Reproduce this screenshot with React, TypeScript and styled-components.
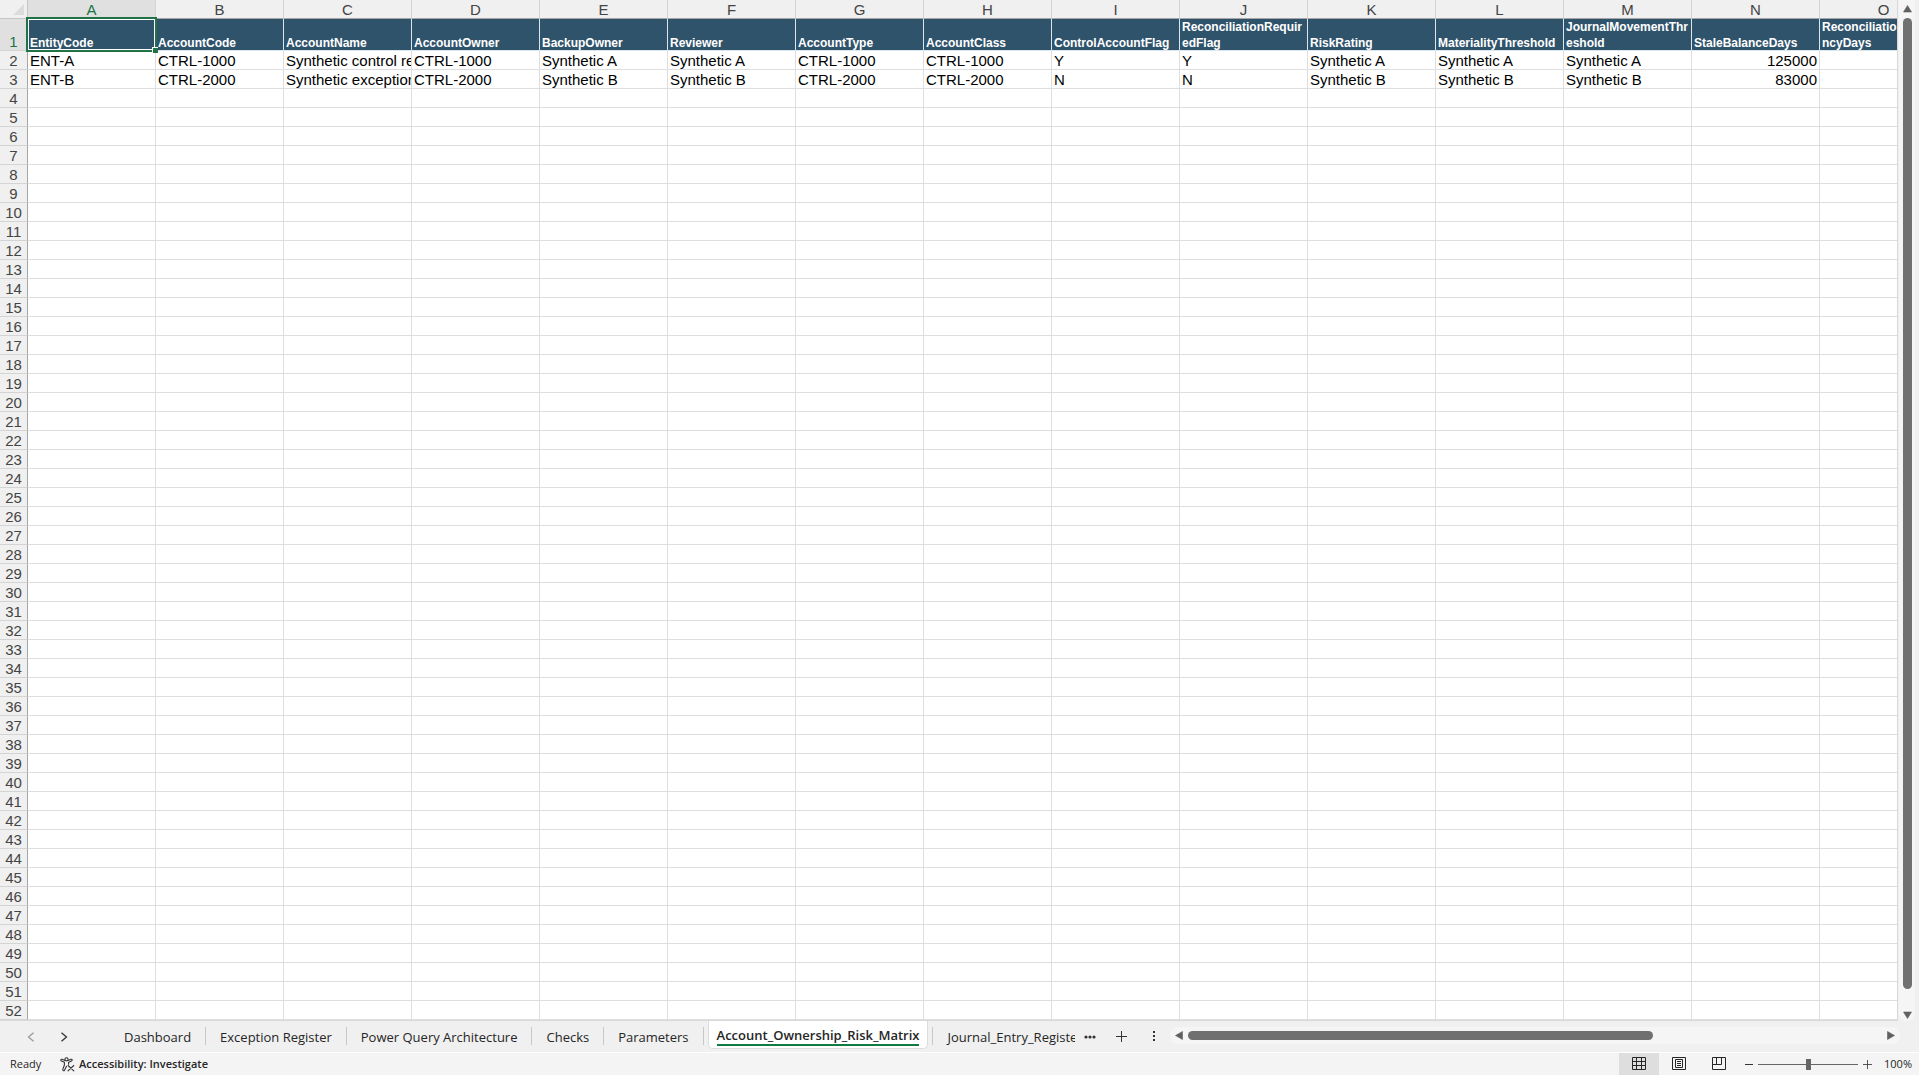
import React from "react";
import styled, { createGlobalStyle, css } from "styled-components";

const sans = '"Liberation Sans", Arial, sans-serif';
const ui = '"Open Sans", "Segoe UI", sans-serif';

const GlobalStyle = createGlobalStyle`
  *, *::before, *::after { box-sizing: border-box; }
  html, body { margin: 0; padding: 0; overflow: hidden; }
  body { background: #f0f0f0; color: #262626; font-family: ${ui}; }
  button { font: inherit; color: inherit; border: 0; padding: 0; margin: 0; background: transparent; }
`;

const Workbook = styled.div`
  display: grid;
  grid-template-rows: minmax(0, 1fr) 32px 22px;
  height: 100vh;
`;

const SheetArea = styled.main`
  display: grid;
  grid-template-columns: minmax(0, 1fr) 21px;
  min-height: 0;
`;

const GridView = styled.div`
  overflow: hidden;
  min-height: 0;
  background: #ffffff;
  border-right: 1px solid #d9d9d9;
  border-bottom: 1px solid #d9d9d9;
`;

const Grid = styled.table`
  table-layout: fixed;
  width: 1948px;
  border-collapse: separate;
  border-spacing: 0;
  font-family: ${sans};
`;

const headingBase = css`
  height: 19px;
  padding: 0;
  font-size: 15px;
  font-weight: 400;
  text-align: center;
  color: #444444;
  background: #f0f0f0;
`;

const ColumnHeading = styled.th<{ $active?: boolean }>`
  ${headingBase}
  padding-top: 1px;
  line-height: 17px;
  border-bottom: 1px solid #a6a6a6;
  border-right: 1px solid #d4d4d4;
  ${(p) => p.$active && css`
    color: #217346;
    background: #e0e0e0;
    border-bottom-color: #217346;
  `}
`;

const Corner = styled.th`
  ${headingBase}
  border-bottom: 1px solid #c4c4c4;
  border-right: 1px solid #c4c4c4;
`;

const CornerMark = styled.svg`
  display: block;
  margin: 0 3px 0 auto;
`;

const RowHeading = styled.th<{ $active?: boolean }>`
  ${headingBase}
  padding-top: 1px;
  line-height: 17px;
  border-bottom: 1px solid #d4d4d4;
  border-right: 1px solid #a6a6a6;
  vertical-align: bottom;
  ${(p) => p.$active && css`
    color: #217346;
    background: #e0e0e0;
    border-right-color: #217346;
  `}
`;

const FieldCell = styled.td`
  position: relative;
  height: 32px;
  padding: 0 2px;
  font-size: 12px;
  font-weight: 700;
  line-height: 16px;
  color: #ffffff;
  background: #30536c;
  vertical-align: bottom;
  word-break: break-all;
  border-right: 1px solid #dce6ee;
  border-bottom: 1px solid #dce6ee;
`;

const FieldText = styled.div`
  margin-bottom: -1px;
`;

const Selection = styled.span`
  position: absolute;
  inset: -2px;
  z-index: 2;
  border: 2px solid #217346;
  box-shadow: inset 0 0 0 1px #ffffff;
  &::after {
    content: "";
    position: absolute;
    right: -3px;
    bottom: -3px;
    width: 6px;
    height: 6px;
    background: #217346;
    border-top: 1px solid #ffffff;
    border-left: 1px solid #ffffff;
  }
`;

const Cell = styled.td<{ $right?: boolean }>`
  height: 19px;
  padding: 1px 2px 0;
  font-size: 15px;
  line-height: 17px;
  color: #000000;
  white-space: nowrap;
  overflow: hidden;
  text-align: ${(p) => (p.$right ? "right" : "left")};
  border-right: 1px solid #dedede;
  border-bottom: 1px solid #dedede;
`;

const VerticalBar = styled.div`
  display: flex;
  flex-direction: column;
  align-items: center;
  margin: 0 4px 0 1px;
  padding: 5px 0 2px;
  gap: 5px;
  background: #f5f5f5;
  border-radius: 0 0 8px 8px;
`;

const VerticalTrack = styled.div`
  display: flex;
  flex: 1;
  padding-bottom: 17px;
`;

const VerticalThumb = styled.div`
  width: 9px;
  border-radius: 5px;
  background: #707070;
`;

const ArrowButton = styled.button`
  display: block;
  line-height: 0;
  svg { display: block; }
`;

const TabBar = styled.nav`
  display: flex;
  min-width: 0;
  background: #f0f0f0;
  border-bottom: 1px solid #ffffff;
`;

const TabNav = styled.div`
  display: flex;
  align-items: center;
  gap: 25px;
  width: 110px;
  padding-left: 27px;
`;

const TabList = styled.div`
  display: flex;
  align-items: flex-start;
`;

const Tab = styled.button<{ $clip?: boolean }>`
  height: 31px;
  padding: 1px ${(p) => (p.$clip ? 0 : 14)}px 0 14px;
  ${(p) => p.$clip && css`width: 142px; text-align: left; overflow: hidden;`}
  font-size: 13px;
  line-height: 30px;
  white-space: nowrap;
`;

const Divider = styled.span`
  width: 1px;
  height: 18px;
  margin-top: 6px;
  background: #c8c8c8;
`;

const ActiveTab = styled.button`
  height: 28px;
  margin: 0 4px;
  padding: 0 8px;
  background: #ffffff;
  border: 1px solid #dcdcdc;
  border-top: 0;
  border-radius: 0 0 5px 5px;
  font-size: 13px;
  font-weight: 600;
  line-height: 25px;
  white-space: nowrap;
`;

const ActiveLabel = styled.span`
  display: block;
  height: 23px;
  border-bottom: 2px solid #107c41;
`;

const TabTools = styled.div`
  display: flex;
  align-items: center;
  gap: 20px;
  padding: 0 11px 0 9px;
`;

const HorizontalBar = styled.div`
  display: flex;
  flex: 1;
  align-items: center;
  gap: 5px;
  height: 17px;
  margin: 6px 19px 0 0;
  padding: 0 5px;
  background: #f5f5f5;
  border-radius: 8px;
`;

const HorizontalTrack = styled.div`
  flex: 1;
`;

const HorizontalThumb = styled.div`
  width: 67%;
  height: 9px;
  border-radius: 5px;
  background: #707070;
`;

const StatusBar = styled.footer`
  display: flex;
  align-items: stretch;
  justify-content: space-between;
  background: #f4f4f4;
  font-size: 11px;
  line-height: 22px;
`;

const StatusGroup = styled.div`
  display: flex;
  align-items: center;
`;

const Ready = styled.span`
  width: 60px;
  padding-left: 10px;
`;

const AccessButton = styled.button`
  display: flex;
  align-items: center;
  gap: 4px;
  font-weight: 600;
`;

const ViewButton = styled.button<{ $active?: boolean }>`
  display: flex;
  align-items: center;
  justify-content: center;
  width: 40px;
  height: 22px;
  background: ${(p) => (p.$active ? "#dedede" : "transparent")};
`;

const ZoomGroup = styled.div`
  display: flex;
  align-items: center;
  gap: 5px;
  padding: 0 7px 0 6px;
`;

const ZoomSlider = styled.input`
  appearance: none;
  width: 100px;
  height: 22px;
  margin: 0;
  background: linear-gradient(#666666, #666666) center / 100% 1px no-repeat;
  &::-webkit-slider-thumb {
    appearance: none;
    width: 5px;
    height: 11px;
    background: #666666;
  }
`;

const ZoomValue = styled.button`
  width: 35px;
  text-align: right;
`;

const letters = "ABCDEFGHIJKLMNO".split("");

const fields = [
  "EntityCode", "AccountCode", "AccountName", "AccountOwner", "BackupOwner",
  "Reviewer", "AccountType", "AccountClass", "ControlAccountFlag",
  "ReconciliationRequiredFlag", "RiskRating", "MaterialityThreshold",
  "JournalMovementThreshold", "StaleBalanceDays", "ReconciliationFrequencyDays",
];

const records = [
  ["ENT-A", "CTRL-1000", "Synthetic control re", "CTRL-1000", "Synthetic A", "Synthetic A", "CTRL-1000", "CTRL-1000", "Y", "Y", "Synthetic A", "Synthetic A", "Synthetic A", "125000", ""],
  ["ENT-B", "CTRL-2000", "Synthetic exception", "CTRL-2000", "Synthetic B", "Synthetic B", "CTRL-2000", "CTRL-2000", "N", "N", "Synthetic B", "Synthetic B", "Synthetic B", "83000", ""],
];

const rowNumbers = Array.from({ length: 51 }, (_, i) => i + 2);

const Triangle = ({ direction }: { direction: "up" | "down" | "left" | "right" }) => {
  const shapes = {
    up: "M4.5 0.5 8.5 7H0.5Z",
    down: "M0.5 1H8.5L4.5 7.5Z",
    left: "M7.5 0.5V8.5L0.5 4.5Z",
    right: "M0.5 0.5V8.5L7.5 4.5Z",
  };
  const vertical = direction === "up" || direction === "down";
  return (
    <svg width={vertical ? 9 : 8} height={vertical ? 8 : 9} aria-hidden="true">
      <path d={shapes[direction]} fill="#606060" stroke="#606060" strokeWidth="0.6" strokeLinejoin="round" />
    </svg>
  );
};

const Chevron = ({ left }: { left?: boolean }) => (
  <svg width="8" height="10" viewBox="0 0 8 10" fill="none" stroke={left ? "#9a9a9a" : "#333333"} strokeWidth="1.3" aria-hidden="true">
    <path d={left ? "M6.5 0.7 1.5 5 6.5 9.3" : "M1.5 0.7 6.5 5 1.5 9.3"} />
  </svg>
);

const AccessibilityIcon = () => (
  <svg width="15" height="15" viewBox="0 0 15 15" fill="none" stroke="#333333" strokeWidth="1.1" strokeLinecap="round" strokeLinejoin="round" aria-hidden="true">
    <circle cx="6.5" cy="2.3" r="1.6" />
    <path d="M5 3.4 2 2.3C.8 2 .4 3.4 1.4 3.9L4.4 5.2V8L2.8 12.4C2.5 13.8 4 14.2 4.5 13.2L6.5 9.2" />
    <path d="M8 3.4 11 2.3C12.2 2 12.7 3.4 11.6 3.9L8.6 5.2V7.2" />
    <path d="M8 8.5 13.8 13.8M13.8 8.5 8 13.8" />
  </svg>
);

const NormalIcon = () => (
  <svg width="14" height="14" fill="none" stroke="#262626" aria-hidden="true">
    <path d="M.5 .5H13.5V12.5H.5ZM4.5 .5V12.5M9.5 .5V12.5M.5 4.5H13.5M.5 8.5H13.5" />
  </svg>
);

const PageLayoutIcon = () => (
  <svg width="14" height="14" fill="none" stroke="#262626" aria-hidden="true">
    <path d="M.5 .5H13.5V12.5H.5ZM3.5 2.5H10.5V10.5H3.5ZM5 4.5H9M5 6.5H9M5 8.5H9" />
  </svg>
);

const PageBreakIcon = () => (
  <svg width="14" height="14" fill="none" stroke="#262626" aria-hidden="true">
    <path d="M.5 .5H13.5V12.5H.5ZM4.5 .5V7.5M9.5 .5V7.5M.5 7.5H9.5" />
  </svg>
);

const PlusIcon = ({ size }: { size: number }) => (
  <svg width={size} height={size} viewBox="0 0 11 11" stroke="#333333" aria-hidden="true">
    <path d="M5.5 0V11M0 5.5H11" />
  </svg>
);

const inactiveTabs = ["Dashboard", "Exception Register", "Power Query Architecture", "Checks", "Parameters"];

export default function App() {
  return (
    <>
      <GlobalStyle />
      <Workbook>
        <SheetArea>
          <GridView>
            <Grid>
              <colgroup>
                <col style={{ width: 28 }} />
                {letters.map((l) => <col key={l} />)}
              </colgroup>
              <thead>
                <tr>
                  <Corner>
                    <CornerMark width="11" height="11" aria-hidden="true"><path d="M11 0V11H0Z" fill="#dcdcdc" /></CornerMark>
                  </Corner>
                  {letters.map((l, i) => <ColumnHeading key={l} scope="col" $active={i === 0}>{l}</ColumnHeading>)}
                </tr>
              </thead>
              <tbody>
                <tr>
                  <RowHeading scope="row" $active>1</RowHeading>
                  {fields.map((f, i) => (
                    <FieldCell key={f}>
                      <FieldText>{f}</FieldText>
                      {i === 0 && <Selection />}
                    </FieldCell>
                  ))}
                </tr>
                {rowNumbers.map((n) => (
                  <tr key={n}>
                    <RowHeading scope="row">{n}</RowHeading>
                    {letters.map((l, c) => (
                      <Cell key={l} $right={l === "N"}>{records[n - 2]?.[c]}</Cell>
                    ))}
                  </tr>
                ))}
              </tbody>
            </Grid>
          </GridView>
          <VerticalBar>
            <ArrowButton aria-label="Scroll up"><Triangle direction="up" /></ArrowButton>
            <VerticalTrack><VerticalThumb /></VerticalTrack>
            <ArrowButton aria-label="Scroll down"><Triangle direction="down" /></ArrowButton>
          </VerticalBar>
        </SheetArea>
        <TabBar aria-label="Sheets">
          <TabNav>
            <ArrowButton aria-label="Previous sheets"><Chevron left /></ArrowButton>
            <ArrowButton aria-label="Next sheets"><Chevron /></ArrowButton>
          </TabNav>
          <TabList>
            {inactiveTabs.map((t) => (
              <React.Fragment key={t}>
                <Tab>{t}</Tab>
                <Divider />
              </React.Fragment>
            ))}
            <ActiveTab aria-current="page"><ActiveLabel>Account_Ownership_Risk_Matrix</ActiveLabel></ActiveTab>
            <Divider />
            <Tab $clip>Journal_Entry_Register</Tab>
          </TabList>
          <TabTools>
            <ArrowButton aria-label="More sheets">
              <svg width="12" height="4" fill="#333333" aria-hidden="true"><circle cx="2" cy="2" r="1.6" /><circle cx="6" cy="2" r="1.6" /><circle cx="10" cy="2" r="1.6" /></svg>
            </ArrowButton>
            <ArrowButton aria-label="New sheet"><PlusIcon size={11} /></ArrowButton>
            <svg width="12" height="11" fill="#333333" aria-hidden="true"><path d="M6 0H8V2H6ZM6 4H8V6H6ZM6 8H8V10H6Z" /></svg>
          </TabTools>
          <HorizontalBar>
            <ArrowButton aria-label="Scroll left"><Triangle direction="left" /></ArrowButton>
            <HorizontalTrack><HorizontalThumb /></HorizontalTrack>
            <ArrowButton aria-label="Scroll right"><Triangle direction="right" /></ArrowButton>
          </HorizontalBar>
        </TabBar>
        <StatusBar>
          <StatusGroup>
            <Ready>Ready</Ready>
            <AccessButton><AccessibilityIcon />Accessibility: Investigate</AccessButton>
          </StatusGroup>
          <StatusGroup>
            <ViewButton $active aria-label="Normal"><NormalIcon /></ViewButton>
            <ViewButton aria-label="Page layout"><PageLayoutIcon /></ViewButton>
            <ViewButton aria-label="Page break preview"><PageBreakIcon /></ViewButton>
            <ZoomGroup>
              <ArrowButton aria-label="Zoom out">
                <svg width="8" height="9" stroke="#333333" aria-hidden="true"><path d="M0 4.5H8" /></svg>
              </ArrowButton>
              <ZoomSlider type="range" min="0" max="200" defaultValue="100" aria-label="Zoom" />
              <ArrowButton aria-label="Zoom in"><PlusIcon size={9} /></ArrowButton>
              <ZoomValue>100%</ZoomValue>
            </ZoomGroup>
          </StatusGroup>
        </StatusBar>
      </Workbook>
    </>
  );
}
